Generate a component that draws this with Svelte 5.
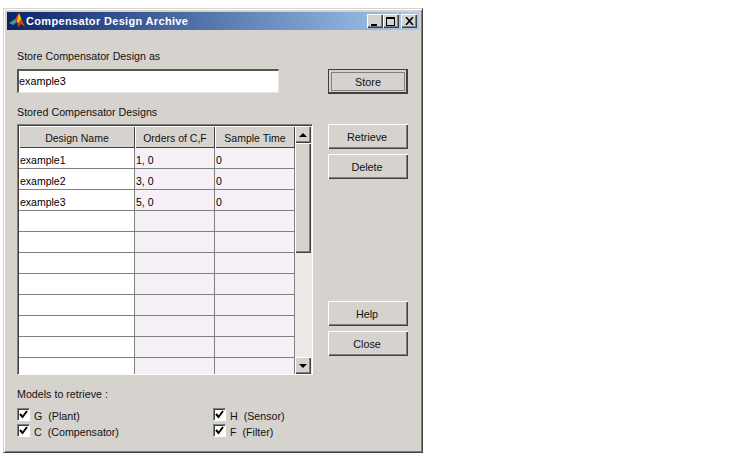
<script>
  const rows = [
    ['example1', '1, 0', '0'],
    ['example2', '3, 0', '0'],
    ['example3', '5, 0', '0'],
    ['', '', ''], ['', '', ''], ['', '', ''], ['', '', ''], ['', '', ''], ['', '', ''], ['', '', ''], ['', '', ''],
  ]
  const checks = ['G  (Plant)', 'H  (Sensor)', 'C  (Compensator)', 'F  (Filter)']
</script>

<div class="page">
  <div class="window">
    <div class="titlebar">
      <svg class="logo" width="17" height="16" viewBox="0 0 17 16">
        <path d="M0 10 L6 6 L8 9 L4 12 L2 11 Z" fill="#3f9c96" />
        <path d="M6 6 L10 0 L16 14 L12 11 L9 14 L8 9 Z" fill="#d2480e" />
        <path d="M10 0 L12 6 L9 10 L8 8 Z" fill="#f6c61c" />
      </svg>
      <span class="title">Compensator Design Archive</span>
      <div class="winbtns">
        <button class="winbtn"><svg width="10" height="9" viewBox="0 0 10 9"><rect x="1" y="7" width="6" height="2" fill="#000" /></svg></button>
        <button class="winbtn"><svg width="10" height="9" viewBox="0 0 10 9"><path d="M0 0H9V9H0Z M1 2V8H8V2Z" fill="#000" fill-rule="evenodd" /></svg></button>
        <button class="winbtn close"><svg width="9" height="8" viewBox="0 0 9 8"><path d="M1 0L8 8M8 0L1 8" stroke="#000" stroke-width="1.6" fill="none" /></svg></button>
      </div>
    </div>

    <div class="body">
      <div class="main">
        <div class="left">
          <div class="label first">Store Compensator Design as</div>
          <div class="textfield">example3</div>
          <div class="label second">Stored Compensator Designs</div>
          <div class="tablebox">
            <div class="table">
              <div class="row head">
                <div class="th c1">Design Name</div>
                <div class="th c2">Orders of C,F</div>
                <div class="th c3">Sample Time</div>
              </div>
              {#each rows as r}
                <div class="row">
                  <div class="td c1">{r[0]}</div>
                  <div class="td c2 tint">{r[1]}</div>
                  <div class="td c3 tint">{r[2]}</div>
                </div>
              {/each}
            </div>
            <div class="scrollbar">
              <div class="sbtn"><span class="arrow up"></span></div>
              <div class="thumb"></div>
              <div class="track"></div>
              <div class="sbtn"><span class="arrow down"></span></div>
            </div>
          </div>
        </div>

        <div class="right">
          <button class="btn store"><span>Store</span></button>
          <button class="btn retrieve">Retrieve</button>
          <button class="btn delete">Delete</button>
          <button class="btn help">Help</button>
          <button class="btn closebtn">Close</button>
        </div>
      </div>

      <div class="label models">Models to retrieve :</div>
      <div class="checks">
        {#each checks as c}
          <div class="check">
            <span class="box"><svg width="9" height="9" viewBox="0 0 9 9"><path d="M1 4L3.5 7L8 1" stroke="#000" stroke-width="2" fill="none" /></svg></span>
            <span class="cname">{c}</span>
          </div>
        {/each}
      </div>
    </div>
  </div>
</div>

<style>
  :global(body) {
    background: #fff;
  }

  .page {
    width: 750px;
    height: 460px;
    padding: 8px 0 0 3px;
    box-sizing: border-box;
    font-family: "Liberation Sans", Arial, sans-serif;
    font-size: 10.7px;
    color: #111;
  }

  .window {
    width: 420px;
    height: 445px;
    box-sizing: border-box;
    background: #d6d3ce;
    border: 1px solid;
    border-color: #d6d3ce #404040 #404040 #d6d3ce;
    box-shadow: inset 1px 1px 0 #fff, inset -1px -1px 0 #808080;
    padding: 3px;
  }

  .titlebar {
    height: 18px;
    display: flex;
    align-items: center;
    background: linear-gradient(90deg, #0a246a, #a6caf0);
    color: #fff;
    padding: 0 2px 0 2px;
  }

  .logo {
    flex: none;
  }

  .title {
    font-weight: bold;
    font-size: 11px;
    letter-spacing: 0.33px;
    white-space: nowrap;
  }

  .winbtns {
    display: flex;
    margin-left: auto;
  }

  .winbtn,
  .btn,
  .sbtn,
  .thumb {
    background: #d6d3ce;
    box-shadow: inset 1px 1px 0 #fff, inset -1px -1px 0 #404040, inset -2px -2px 0 #808080;
  }

  .winbtn {
    width: 16px;
    height: 14px;
    padding: 0;
    border: 0;
    display: flex;
    align-items: center;
    justify-content: center;
  }

  .winbtn.close {
    margin-left: 2px;
  }

  .body {
    padding: 0 0 0 10px;
  }

  .main {
    display: flex;
  }

  .left {
    width: 296px;
  }

  .label {
    line-height: 14px;
    white-space: pre;
  }

  .label.first {
    margin-top: 19px;
  }

  .label.second {
    margin-top: 12px;
  }

  .label.models {
    margin-top: 12px;
  }

  .textfield {
    margin-top: 6px;
    width: 262px;
    height: 24px;
    box-sizing: border-box;
    background: #fff;
    border: 2px solid;
    border-color: #555 #e8e6e1 #e8e6e1 #555;
    border-width: 2px 1px 1px 2px;
    line-height: 21px;
    font-size: 10.8px;
    color: #000;
  }

  .tablebox {
    margin-top: 5px;
    width: 296px;
    height: 251px;
    box-sizing: border-box;
    border: 1px solid;
    border-color: #808080 #fff #fff #808080;
    display: flex;
    overflow: hidden;
  }

  .table {
    width: 276px;
    flex: none;
    border-left: 1px solid #404040;
    border-top: 1px solid #404040;
  }

  .row {
    display: flex;
    height: 21px;
    box-sizing: border-box;
    border-bottom: 1px solid #808080;
  }

  .row.head {
    height: 22px;
    border-bottom: 0;
  }

  .c1 {
    width: 116px;
  }

  .c2 {
    width: 80px;
  }

  .c3 {
    width: 80px;
  }

  .th {
    box-sizing: border-box;
    background: #d6d3ce;
    box-shadow: inset 1px 1px 0 #fff, inset -1px -1px 0 #404040;
    text-align: center;
    line-height: 25px;
    font-size: 10.5px;
  }

  .td {
    box-sizing: border-box;
    background: #fff;
    border-right: 1px solid #808080;
    line-height: 24px;
    padding-left: 1px;
    color: #000;
    font-size: 10.5px;
  }

  .td.tint {
    background: #f5f1f6;
  }

  .scrollbar {
    width: 17px;
    flex: none;
    display: flex;
    flex-direction: column;
    background: #eee8e8;
    border-top: 1px solid #404040;
    padding-right: 1px;
    box-sizing: border-box;
  }

  .sbtn {
    height: 17px;
    flex: none;
    display: flex;
    align-items: center;
    justify-content: center;
  }

  .thumb {
    height: 110px;
    flex: none;
  }

  .track {
    flex: 1;
  }

  .arrow {
    width: 0;
    height: 0;
    border-left: 4px solid transparent;
    border-right: 4px solid transparent;
  }

  .arrow.up {
    border-bottom: 4px solid #000;
  }

  .arrow.down {
    border-top: 4px solid #000;
  }

  .right {
    width: 80px;
    margin-left: 15px;
    display: flex;
    flex-direction: column;
  }

  .btn {
    width: 80px;
    height: 25px;
    padding: 1px 2px 0 0;
    border: 0;
    font: 10.8px "Liberation Sans", Arial, sans-serif;
    color: #111;
    flex: none;
  }

  .btn.store {
    margin-top: 39px;
    box-shadow: inset 1px 1px 0 #fff, inset -2px -2px 0 #404040;
    outline: 1px solid #404040;
    outline-offset: -1px;
    padding: 3px;
  }

  .btn.store span {
    display: block;
    height: 100%;
    box-sizing: border-box;
    border: 1px solid #808080;
    line-height: 18px;
  }

  .btn.retrieve {
    margin-top: 30px;
  }

  .btn.delete {
    margin-top: 5px;
  }

  .btn.help {
    margin-top: 122px;
  }

  .btn.closebtn {
    margin-top: 5px;
  }

  .checks {
    display: grid;
    grid-template-columns: 196px 1fr;
    margin-top: 7px;
    row-gap: 3px;
  }

  .check {
    display: flex;
    align-items: center;
    height: 13px;
  }

  .box {
    width: 13px;
    height: 13px;
    box-sizing: border-box;
    background: #fff;
    border: 1px solid;
    border-color: #808080 #fff #fff #808080;
    box-shadow: inset 1px 1px 0 #404040;
    display: flex;
    align-items: center;
    justify-content: center;
    flex: none;
  }

  .cname {
    margin-left: 4px;
    padding-top: 3px;
    white-space: pre;
  }
</style>
